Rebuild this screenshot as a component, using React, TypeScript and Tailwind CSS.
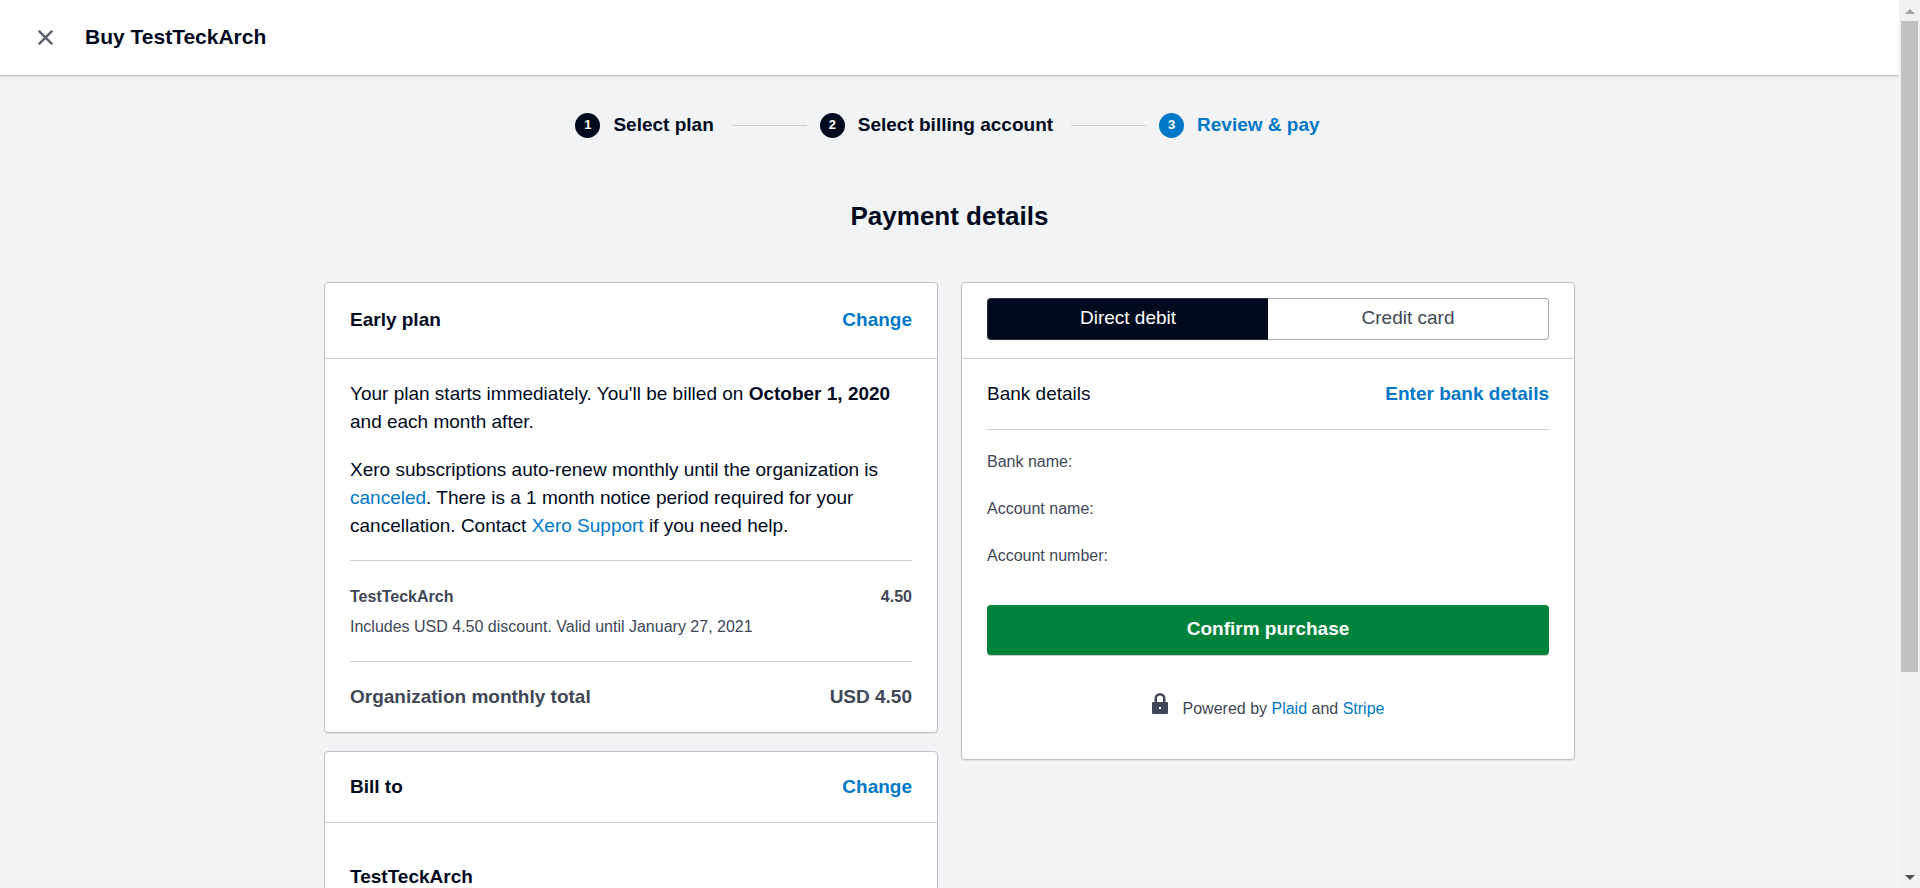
import React, { useState } from "react";

const steps = [
  { label: "Select plan", current: false },
  { label: "Select billing account", current: false },
  { label: "Review & pay", current: true },
];

const bankFields = ["Bank name:", "Account name:", "Account number:"];

function Card({ children }: { children: React.ReactNode }) {
  return (
    <section className="rounded-[4px] border border-[#bfc2c8] bg-white shadow-[0_1px_1px_rgba(0,10,30,0.08)]">
      {children}
    </section>
  );
}

function TextLink({ children }: { children: React.ReactNode }) {
  return (
    <a href="#" className="text-[#0078c8] hover:underline">
      {children}
    </a>
  );
}

function LinkButton({ children }: { children: React.ReactNode }) {
  return (
    <button type="button" className="cursor-pointer font-bold text-[#0078c8]">
      {children}
    </button>
  );
}

function Stepper() {
  return (
    <ol className="flex items-center justify-center pr-1">
      {steps.map((step, i) => (
        <li key={step.label} className="flex items-center">
          {i > 0 && <span className="mr-[13px] ml-[18px] h-px w-[75px] bg-[#ccced2]" />}
          <span
            className={`flex size-[25px] items-center justify-center rounded-full pb-0.5 text-[13px] font-bold text-white ${
              step.current ? "bg-[#0078c8]" : "bg-[#000a1e]"
            }`}
          >
            {i + 1}
          </span>
          <span
            className={`ml-[13px] pb-0.5 font-bold leading-[23px] ${step.current ? "text-[#0078c8]" : ""}`}
          >
            {step.label}
          </span>
        </li>
      ))}
    </ol>
  );
}

function PlanCard() {
  return (
    <Card>
      <div className="flex h-[76px] items-center justify-between border-b border-[#ccced2] px-[25px] pb-0.5">
        <h2 className="font-bold">Early plan</h2>
        <LinkButton>Change</LinkButton>
      </div>
      <div className="px-[25px] pt-[21px] pb-[21px]">
        <p>
          Your plan starts immediately. You'll be billed on <strong>October 1, 2020</strong> and each
          month after.
        </p>
        <p className="mt-5">
          Xero subscriptions auto-renew monthly until the organization is{" "}
          <TextLink>canceled</TextLink>. There is a 1 month notice period required for your
          cancellation. Contact <TextLink>Xero Support</TextLink> if you need help.
        </p>
        <div className="mt-5 border-y border-[#ccced2] pt-[21px] pb-[19px] text-[16px] leading-[30px] text-[#404756]">
          <div className="flex justify-between font-bold">
            <span>TestTeckArch</span>
            <span>4.50</span>
          </div>
          <p>Includes USD 4.50 discount. Valid until January 27, 2021</p>
        </div>
        <div className="mt-[21px] flex justify-between font-bold text-[#404756]">
          <span>Organization monthly total</span>
          <span>USD 4.50</span>
        </div>
      </div>
    </Card>
  );
}

function BillToCard() {
  return (
    <Card>
      <div className="flex h-[71px] items-center justify-between border-b border-[#ccced2] px-[25px]">
        <h2 className="font-bold">Bill to</h2>
        <LinkButton>Change</LinkButton>
      </div>
      <div className="px-[25px] pt-10 pb-10">
        <p className="font-bold">TestTeckArch</p>
      </div>
    </Card>
  );
}

function PaymentCard() {
  const [method, setMethod] = useState("Direct debit");
  return (
    <Card>
      <div className="h-[76px] border-b border-[#ccced2] px-[25px] pt-[15px]">
        <div className="flex h-[42px]">
          {["Direct debit", "Credit card"].map((name) => (
            <button
              key={name}
              type="button"
              aria-pressed={method === name}
              onClick={() => setMethod(name)}
              className={`flex-1 cursor-pointer border pb-0.5 first:rounded-l-[4px] first:border-r-0 last:rounded-r-[4px] last:border-l-0 ${
                method === name
                  ? "border-[#2b3444] bg-[#000a1e] text-white"
                  : "border-[#a6a9b0] bg-white text-[#404756]"
              }`}
            >
              {name}
            </button>
          ))}
        </div>
      </div>
      <div className="px-[25px] pt-[21px] pb-[38px]">
        <div className="flex items-center justify-between border-b border-[#ccced2] pb-[21px]">
          <h2>Bank details</h2>
          <LinkButton>Enter bank details</LinkButton>
        </div>
        <div className="mt-[18px] flex flex-col gap-5 text-[16px] leading-[27px] text-[#404756]">
          {bankFields.map((field) => (
            <p key={field}>{field}</p>
          ))}
        </div>
        <button
          type="button"
          className="mt-9 h-[50px] w-full cursor-pointer rounded-[4px] bg-[#00823c] pb-0.5 font-bold text-white shadow-[0_1px_0_rgba(0,10,30,0.2)]"
        >
          Confirm purchase
        </button>
        <div className="mt-[38px] flex items-start justify-center gap-[15px] text-[16px] text-[#404756]">
          <svg width="16" height="21" viewBox="0 0 16 21" aria-hidden="true">
            <path
              fill="#404756"
              fillRule="evenodd"
              d="M2.5 9V5.5a5.5 5.5 0 0 1 11 0V9H15a1 1 0 0 1 1 1v10a1 1 0 0 1-1 1H1a1 1 0 0 1-1-1V10a1 1 0 0 1 1-1zM5 9h6V5.5a3 3 0 0 0-6 0zM7 14v2h2v-2z"
            />
          </svg>
          <p className="pt-1 leading-6">
            Powered by <TextLink>Plaid</TextLink> and <TextLink>Stripe</TextLink>
          </p>
        </div>
      </div>
    </Card>
  );
}

function ScrollRail() {
  return (
    <div aria-hidden="true" className="flex w-[21px] flex-col items-center bg-[#f1f1f1]">
      <div className="flex h-[21px] items-center pt-0.5">
        <svg width="10" height="5" viewBox="0 0 10 5">
          <path d="M5 0 10 5H0z" fill="#a3a3a3" />
        </svg>
      </div>
      <div className="flex w-[17px] flex-1 flex-col">
        <div className="h-[77%] bg-[#c1c1c1]" />
      </div>
      <div className="flex h-[21px] items-center">
        <svg width="10" height="5" viewBox="0 0 10 5">
          <path d="M0 0H10L5 5z" fill="#505050" />
        </svg>
      </div>
    </div>
  );
}

export default function App() {
  return (
    <div className="flex h-screen bg-[#f2f3f5] font-['Liberation_Sans',Arial,sans-serif] text-[19px] leading-7 text-[#000a1e]">
      <div className="flex-1 overflow-y-auto [scrollbar-width:none]">
        <header className="flex h-[76px] items-center border-b border-[#bfc2c8] bg-white pl-[38px] shadow-[0_1px_0_rgba(0,10,30,0.08)]">
          <button type="button" aria-label="Close" className="cursor-pointer">
            <svg width="15" height="15" viewBox="0 0 15 15" aria-hidden="true">
              <path
                d="M1.4 1.4 13.6 13.6M13.6 1.4 1.4 13.6"
                stroke="#59606d"
                strokeWidth="2.4"
                strokeLinecap="round"
              />
            </svg>
          </button>
          <h1 className="ml-8 pb-0.5 text-[21px] font-bold">Buy TestTeckArch</h1>
        </header>
        <main className="px-6 pt-[37px]">
          <Stepper />
          <h2 className="mt-[62px] text-center text-[26px] leading-8 font-bold">Payment details</h2>
          <div className="mx-auto mt-[50px] grid max-w-[1251px] grid-cols-2 items-start gap-[23px] pb-12">
            <div className="flex flex-col gap-[18px]">
              <PlanCard />
              <BillToCard />
            </div>
            <PaymentCard />
          </div>
        </main>
      </div>
      <ScrollRail />
    </div>
  );
}
